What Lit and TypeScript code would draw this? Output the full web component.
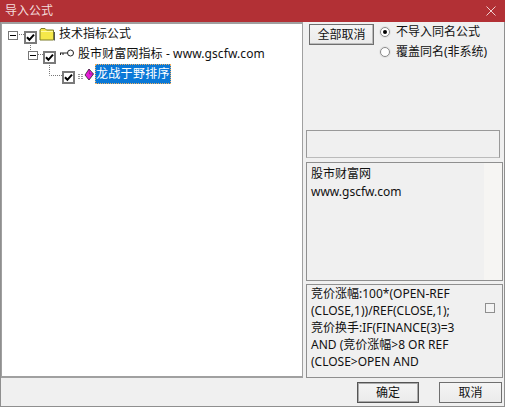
import { LitElement, html, css, svg } from "lit";
import { customElement } from "lit/decorators.js";

const check = (cls: string) => html`<span class="cb ${cls}"><svg width="9" height="9" viewBox="0 0 9 9"><path d="M1 4.2 L3.4 6.8 L8 1.6" fill="none" stroke="#000" stroke-width="2"/></svg></span>`;

@customElement("app-root")
export class AppRoot extends LitElement {
  static styles = css`
    :host { display: block; width: 505px; height: 407px; overflow: hidden; }
    * { box-sizing: border-box; }
    .win { position: relative; width: 505px; height: 407px; background: #f0f0f0; color: #111;
      font: 12px/18px "Noto Sans", "Noto Sans CJK SC", sans-serif; display: flex; flex-direction: column; border: 1px solid #8f8f8f; border-top: 0; }
    .title { height: 22px; flex: none; margin: 0 -1px; background: #b23035; color: #f3dcdc; display: flex; align-items: center; justify-content: space-between; padding: 0 9px 0 5px; font-size: 12px; }
    .main { display: flex; gap: 3px; height: 356px; flex: none; padding-right: 1px; }
    .tree { position: relative; width: 302px; flex: none; background: #fff; border: 2px solid #a0a0a0; border-right-width: 1px; border-left-width: 1px; padding: 0; }
    .lines { position: absolute; left: -2px; top: -24px; pointer-events: none; }
    .row { position: absolute; display: flex; align-items: center; height: 20px; white-space: nowrap; }
    .r1 { left: 57px; top: 0px; }
    .r2 { left: 76px; top: 20px; letter-spacing: .1px; }
    .r3 { left: 93px; top: 40px; }
    .sel { background: #0a78d7; color: #fff; outline: 1px dotted #f0b060; outline-offset: -1px; padding: 0 1px; height: 20px; line-height: 19px; letter-spacing: .3px; }
    .cb { position: absolute; width: 13px; height: 13px; border: 2px solid #7a7a7a; background: #fff; display: flex; align-items: center; justify-content: center; }
    .c1 { left: 22px; top: 7px; } .c2 { left: 41px; top: 27px; } .c3 { left: 60px; top: 47px; }
    .exp { position: absolute; width: 10px; height: 9px; border: 1px solid #777; background: #fff; display: flex; align-items: center; justify-content: center; }
    .exp::after { content: ""; width: 6px; height: 1px; background: #000; }
    .e1 { left: 6px; top: 7px; } .e2 { left: 26px; top: 27px; }
    .ic { position: absolute; }
    .ic-folder { left: 37px; top: 3px; }
    .ic-key { left: 57px; top: 25px; }
    .ic-gem { left: 76px; top: 44px; }
    .side { flex: 1; display: flex; flex-direction: column; min-width: 0; }
    .top { height: 106px; flex: none; position: relative; display: flex; align-items: flex-start; gap: 5px; padding: 2px 0 0 3px; }
    .btn { background: linear-gradient(#f4f4f4, #ebebeb); border: 1px solid #6f6f6f; font: inherit; color: #111; padding: 0; display: flex; align-items: center; justify-content: center; }
    .all { width: 65px; height: 21px; box-shadow: inset -1px -1px 0 #bbb; }
    .radios { display: flex; flex-direction: column; gap: 2px; margin-top: -1px; }
    .radio { display: flex; align-items: center; gap: 6px; height: 18px; }
    .dot { width: 10px; height: 10px; border-radius: 50%; border: 1px solid #8a8a8a; background: #fff; display: flex; align-items: center; justify-content: center; margin-left: 1px; box-shadow: 0 0 0 1px #e4e4e4; }
    .dot.on::after { content: ""; width: 4px; height: 4px; border-radius: 50%; background: #000; }
    .empty { height: 28px; width: 194px; flex: none; border: 1px solid #999; border-bottom-color: #bbb; background: #f0f0f0; margin-top: 2px; }
    .desc { height: 119px; flex: none; margin-top: 4px; border: 1px solid #8f8f8f; padding: 2px 4px; background: linear-gradient(90deg, #f0f0f0 0 177px, #f6f5f3 177px); }
    .formula { height: 94px; flex: none; margin-top: 3px; border: 1px solid #8f8f8f; padding: 0 4px; position: relative; line-height: 17px; font-size: 12px; background: #f0f0f0; }
    .formula .t { width: 165px; }
    .sb { position: absolute; right: 7px; top: 18px; width: 10px; height: 10px; border: 1px solid #8f8f8f; background: #f4f4f4; }
    .foot { flex: 1; display: flex; justify-content: flex-end; gap: 20px; padding: 4px 2px 0 0; }
    .act { width: 62px; height: 21px; }
    .act.ok { border-color: #555; box-shadow: inset 0 0 0 1px #aaa; }
    .act.no { width: 63px; }
  `;

  render() {
    return html`<div class="win">
      <div class="title"><span>导入公式</span>
        <svg width="10" height="10" viewBox="0 0 10 10"><path d="M.5 .5 L9.5 9.5 M9.5 .5 L.5 9.5" stroke="#eecfcf" stroke-width="1"/></svg>
      </div>
      <div class="main">
        <div class="tree">
          <svg class="lines" width="200" height="100" viewBox="0 0 200 100">
            ${svg`<path d="M17 34.500H24 M30.500 43V51 M36 54.500H43 M49.500 63V75.500H63" fill="none" stroke="#777" stroke-dasharray="1 1"/>`}
          </svg>
          <span class="exp e1"></span>${check("c1")}
          <svg class="ic ic-folder" width="17" height="14" viewBox="0 0 17 14">
            <path d="M1 3 L2 1.500 H6 L7.500 3 H14.500 V13 H1Z" fill="#f5e84a" stroke="#7d7d2a"/><path d="M15.500 5V13.500" stroke="#555"/><path d="M2 4.500H14" stroke="#fff8a0"/>
          </svg>
          <div class="row r1">技术指标公式</div>
          <span class="exp e2"></span>${check("c2")}
          <svg class="ic ic-key" width="16" height="8" viewBox="0 0 16 8">
            <circle cx="11.500" cy="4" r="3" fill="#fff" stroke="#222"/><path d="M8.500 4H1 M1.500 4V6 M4 4V6" stroke="#222" fill="none"/>
          </svg>
          <div class="row r2">股市财富网指标 - www.gscfw.com</div>
          ${check("c3")}
          <svg class="ic ic-gem" width="17" height="13" viewBox="0 0 17 13">
            <path d="M0 6.500H6 M0 8.500H6 M0 10.500H6" stroke="#999" stroke-dasharray="2 1"/><path d="M11 1 L15.500 6 L11 12 L7 7Z" fill="#e81fd8" stroke="#222" stroke-width=".8"/><path d="M11 1 L11.500 6 L15.500 6" stroke="#7a0a70" stroke-width=".6" fill="none"/>
          </svg>
          <div class="row r3"><span class="sel">龙战于野排序</span></div>
        </div>
        <div class="side">
          <div class="top">
            <div class="btn all">全部取消</div>
            <div class="radios">
              <label class="radio"><span class="dot on"></span>不导入同名公式</label>
              <label class="radio"><span class="dot"></span>覆盖同名(非系统)</label>
            </div>
          </div>
          <div class="empty"></div>
          <div class="desc">股市财富网<br />www.gscfw.com</div>
          <div class="formula">
            <div class="t">竞价涨幅:100*(OPEN-REF (CLOSE,1))/REF(CLOSE,1);<br />竞价换手:IF(FINANCE(3)=3 AND (竞价涨幅&gt;8 OR REF (CLOSE&gt;OPEN AND</div>
            <span class="sb"></span>
          </div>
        </div>
      </div>
      <div class="foot">
        <div class="btn act ok">确定</div>
        <div class="btn act no">取消</div>
      </div>
    </div>`;
  }
}
